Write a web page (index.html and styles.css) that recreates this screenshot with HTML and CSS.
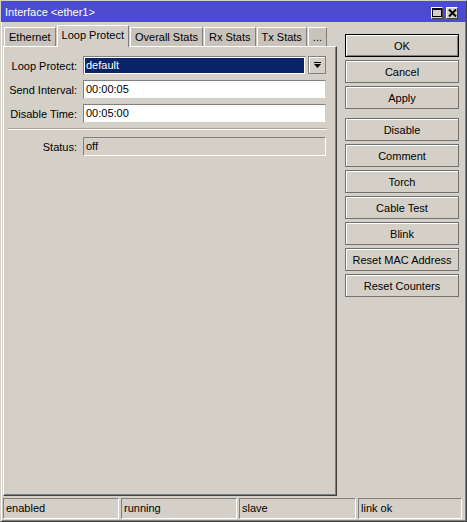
FILE: index.html
```html
<!DOCTYPE html>
<html lang="en">
<head>
    <meta charset="UTF-8">
    <title>Interface &lt;ether1&gt;</title>
    <link rel="stylesheet" href="styles.css">
</head>
<body>
    <div class="window">
        <div class="titlebar">
            <span class="title">Interface &lt;ether1&gt;</span>
            <div class="title-buttons">
                <span class="tbtn">
                    <svg width="10" height="9" viewBox="0 0 10 9"><rect x="0.5" y="0.5" width="9" height="8" fill="none" stroke="#000"/><rect x="0" y="0" width="10" height="2" fill="#000"/></svg>
                </span>
                <span class="tbtn">
                    <svg width="9" height="8" viewBox="0 0 9 8"><path d="M1 0.5 L8 7.5 M8 0.5 L1 7.5" stroke="#000" stroke-width="2"/></svg>
                </span>
            </div>
        </div>

        <div class="main">
            <div class="left">
                <div class="tabs">
                    <div class="tab">Ethernet</div>
                    <div class="tab active">Loop Protect</div>
                    <div class="tab">Overall Stats</div>
                    <div class="tab">Rx Stats</div>
                    <div class="tab">Tx Stats</div>
                    <div class="tab">...</div>
                </div>
                <div class="panel">
                    <div class="row">
                        <label>Loop Protect:</label>
                        <div class="select">
                            <span class="field selected"><span class="sel-text">default</span></span>
                            <span class="drop">
                                <svg width="9" height="9" viewBox="0 0 9 9"><rect x="1" y="1" width="7" height="1" fill="#000"/><path d="M1 3 H8 L4.5 7 Z" fill="#000"/></svg>
                            </span>
                        </div>
                    </div>
                    <div class="row">
                        <label>Send Interval:</label>
                        <div class="field">00:00:05</div>
                    </div>
                    <div class="row">
                        <label>Disable Time:</label>
                        <div class="field">00:05:00</div>
                    </div>
                    <div class="sep"></div>
                    <div class="row">
                        <label>Status:</label>
                        <div class="field readonly">off</div>
                    </div>
                </div>
            </div>

            <div class="buttons">
                <button class="default">OK</button>
                <button>Cancel</button>
                <button>Apply</button>
                <button class="group">Disable</button>
                <button>Comment</button>
                <button>Torch</button>
                <button>Cable Test</button>
                <button>Blink</button>
                <button>Reset MAC Address</button>
                <button>Reset Counters</button>
            </div>
        </div>

        <div class="statusbar">
            <div class="cell">enabled</div>
            <div class="cell">running</div>
            <div class="cell">slave</div>
            <div class="cell">link ok</div>
        </div>
    </div>
</body>
</html>
```

FILE: styles.css
```css
* { box-sizing: border-box; }

body {
    margin: 0;
    font-family: "Liberation Sans", Arial, sans-serif;
    font-size: 11px;
    color: #000;
    background: #d4d0c8;
}

.window {
    width: 467px;
    height: 522px;
    display: flex;
    flex-direction: column;
    background: #d4d0c8;
    border: 1px solid #404040;
    border-top-color: #d4d0c8;
    border-left-color: #d4d0c8;
    box-shadow: inset 1px 1px #fff, inset -1px -1px #808080;
}

/* title bar */
.titlebar {
    height: 21px;
    background: #4b4bd2;
    color: #fff;
    display: flex;
    align-items: center;
    justify-content: space-between;
    padding: 0 8px 0 4px;
    font-size: 11px;
}
.title { padding-top: 1px; }
.title-buttons { display: flex; gap: 3px; padding-top: 2px; }
.tbtn {
    width: 12px;
    height: 12px;
    background: #d4d0c8;
    display: flex;
    align-items: center;
    justify-content: center;
    border: 1px solid #404040;
    border-top-color: #fff;
    border-left-color: #fff;
}

/* main area */
.main {
    flex: 1;
    display: flex;
    padding: 3px 7px 0 2px;
    min-height: 0;
}
.left {
    width: 334px;
    display: flex;
    flex-direction: column;
}

.tabs {
    display: flex;
    align-items: flex-end;
    height: 21px;
    padding-left: 1px;
}
.tab {
    height: 19px;
    padding: 3px 4px 0;
    margin-right: 1px;
    background: #c8c4bc;
    border: 1px solid #d4d0c8;
    border-top-color: #fff;
    border-left-color: #fff;
    border-right-color: #808080;
    border-bottom: none;
    white-space: nowrap;
}
.tab.active {
    height: 22px;
    padding: 3px 4px 0;
    background: #d4d0c8;
    margin-bottom: -1px;
    position: relative;
    z-index: 1;
}

.panel {
    flex: 1;
    border: 1px solid #404040;
    border-top-color: #fff;
    border-left-color: #fff;
    box-shadow: inset -1px -1px #808080;
    padding: 9px 9px 0 0;
}

.row {
    display: flex;
    align-items: center;
    height: 19px;
    margin-bottom: 5px;
}
.row label {
    width: 73px;
    text-align: right;
    margin-right: 6px;
}

.field {
    width: 243px;
    height: 19px;
    background: #fff;
    border: 1px solid #808080;
    border-right-color: #d4d0c8;
    border-bottom-color: #d4d0c8;
    padding: 2px 2px 0;
}
.field.readonly {
    background: #d4d0c8;
    border: 1px solid #808080;
    border-right-color: #fff;
    border-bottom-color: #fff;
}

.select { display: flex; width: 243px; gap: 2px; }
.field.selected {
    width: 223px;
    padding: 1px;
}
.sel-text {
    display: block;
    height: 15px;
    background: #0a246a;
    color: #fff;
    padding: 1px 1px 0;
    outline: 1px dotted #fff;
}
.drop {
    width: 18px;
    height: 18px;
    display: flex;
    align-items: center;
    justify-content: center;
    border: 1px solid #808080;
    box-shadow: inset 1px 1px #fff;
}

.sep {
    height: 2px;
    margin: 3px 0 7px 4px;
    border-top: 1px solid #a8a49c;
    border-bottom: 1px solid #fff;
}

/* command buttons */
.buttons {
    width: 114px;
    margin-left: 8px;
    padding-top: 9px;
    display: flex;
    flex-direction: column;
    gap: 3px;
}
button {
    height: 23px;
    font-family: inherit;
    font-size: 11px;
    color: #000;
    background: #d4d0c8;
    border: 1px solid #707070;
    box-shadow: inset 1px 1px #fff;
    padding: 0;
}
button.default {
    border-color: #000;
    box-shadow: inset 1px 1px #fff, inset -1px -1px #808080;
}
button.group { margin-top: 6px; }

/* status bar */
.statusbar {
    display: grid;
    grid-template-columns: 116px 116px 117px 104px;
    gap: 2px;
    height: 21px;
    margin: 2px 0 2px;
    padding-left: 2px;
}
.cell {
    border: 1px solid #808080;
    border-right-color: #fff;
    border-bottom-color: #fff;
    padding: 3px 2px 0;
}
```
